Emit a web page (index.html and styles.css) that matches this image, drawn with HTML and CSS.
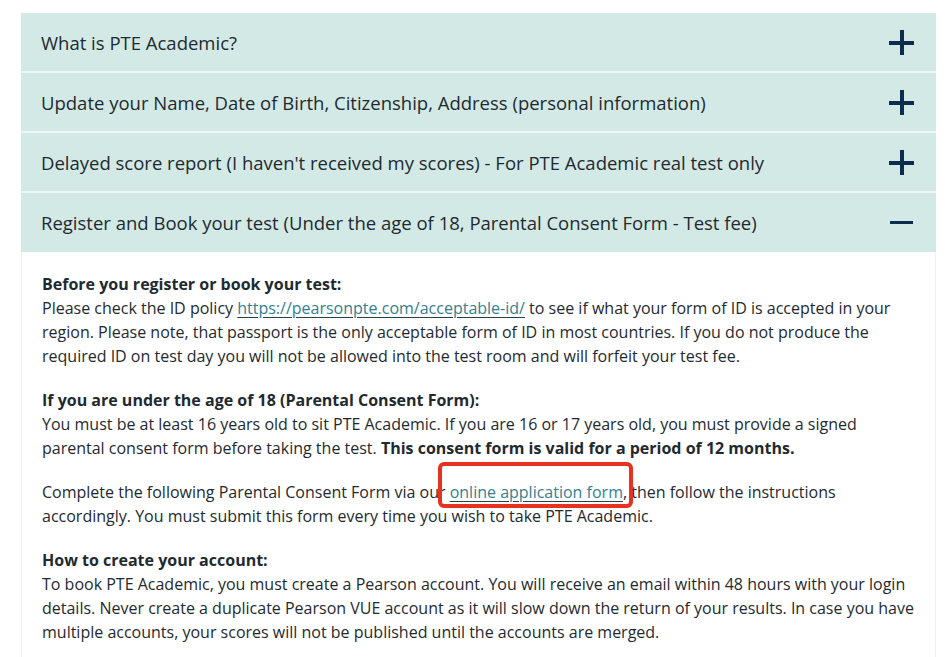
FILE: index.html
```html
<!DOCTYPE html>
<html lang="en">
<head>
    <meta charset="UTF-8">
    <meta name="viewport" content="width=device-width, initial-scale=1.0">
    <title>PTE Academic FAQ</title>
    <link rel="stylesheet" href="styles.css">
</head>
<body>
    <div class="accordion">
        <div class="item">
            <div class="item-head">
                <span>What is PTE Academic?</span>
                <span class="toggle plus"></span>
            </div>
        </div>
        <div class="item">
            <div class="item-head">
                <span>Update your Name, Date of Birth, Citizenship, Address (personal information)</span>
                <span class="toggle plus"></span>
            </div>
        </div>
        <div class="item">
            <div class="item-head">
                <span>Delayed score report (I haven't received my scores) - For PTE Academic real test only</span>
                <span class="toggle plus"></span>
            </div>
        </div>
        <div class="item open">
            <div class="item-head">
                <span>Register and Book your test (Under the age of 18, Parental Consent Form - Test fee)</span>
                <span class="toggle minus"></span>
            </div>
            <div class="item-body">
                <p>
                    <strong>Before you register or book your test:</strong><br>
                    Please check the ID policy <a href="#">https://pearsonpte.com/acceptable-id/</a> to see if what your form of ID is accepted in your region. Please note, that passport is the only acceptable form of ID in most countries. If you do not produce the required ID on test day you will not be allowed into the test room and will forfeit your test fee.
                </p>
                <p>
                    <strong>If you are under the age of 18 (Parental Consent Form):</strong><br>
                    You must be at least 16 years old to sit PTE Academic. If you are 16 or 17 years old, you must provide a signed parental consent form before taking the test. <strong>This consent form is valid for a period of 12 months.</strong>
                </p>
                <p>
                    Complete the following Parental Consent Form via our <span class="mark"><a href="#">online application form</a></span>, then follow the instructions accordingly. You must submit this form every time you wish to take PTE Academic.
                </p>
                <p>
                    <strong>How to create your account:</strong><br>
                    To book PTE Academic, you must create a Pearson account. You will receive an email within 48 hours with your login details. Never create a duplicate Pearson VUE account as it will slow down the return of your results. In case you have multiple accounts, your scores will not be published until the accounts are merged.
                </p>
            </div>
        </div>
    </div>
</body>
</html>
```

FILE: styles.css
```css
body {
    font-family: "Open Sans", "Noto Sans", sans-serif;
    margin: 0;
    padding: 13px 16px 0 21px;
    background-color: #fff;
    color: #1e2a30;
}
.accordion {
    width: 915px;
}
.item-head {
    background-color: #d3e9e6;
    height: 58px;
    padding: 0 22px 0 20px;
    display: flex;
    align-items: center;
    justify-content: space-between;
    font-size: 18.5px;
    font-weight: 500;
    border-bottom: 2px solid #eef6f5;
}
.item.open .item-head {
    border-bottom: none;
    height: 59px;
}
.toggle {
    position: relative;
    width: 25px;
    height: 25px;
}
.toggle::before,
.toggle::after {
    content: "";
    position: absolute;
    background-color: #0d2d4f;
}
.toggle::before {
    left: 0;
    right: 0;
    top: 11px;
    height: 4px;
}
.plus::after {
    top: 0;
    bottom: 0;
    left: 11px;
    width: 4px;
}
.minus::before {
    left: 1px;
    right: 1px;
    height: 3px;
}
.item-body {
    border-left: 1px solid #f0f0f0;
    border-right: 1px solid #f0f0f0;
    padding: 20px 20px 1px 20px;
    font-size: 16px;
    line-height: 24px;
}
.item-body p {
    margin: 0 0 20px 0;
}
.item-body strong {
    font-weight: 700;
}
.item-body a {
    color: #347f8f;
    text-decoration: underline;
    text-decoration-color: #27404a;
    text-underline-offset: 3px;
}
.mark {
    position: relative;
}
.mark::after {
    content: "";
    position: absolute;
    left: -12px;
    right: -10px;
    top: -19px;
    bottom: -5px;
    border: 4px solid #e8321f;
    border-radius: 6px;
}
```
